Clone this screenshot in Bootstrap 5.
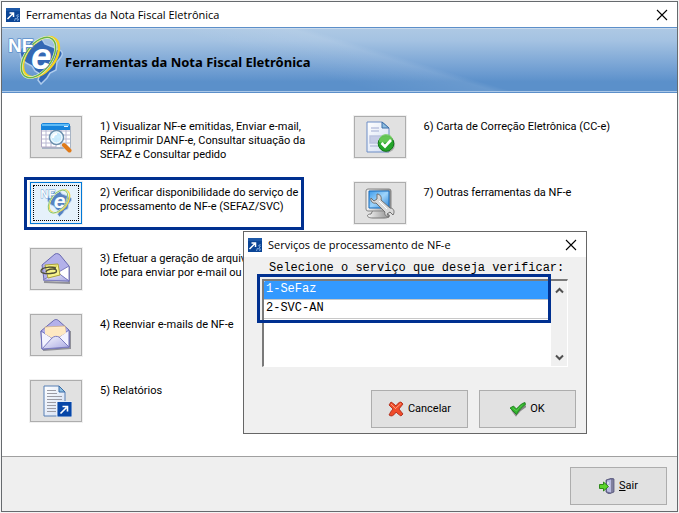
<!DOCTYPE html>
<html lang="pt-BR">
<head>
<meta charset="utf-8">
<meta name="viewport" content="width=device-width, initial-scale=1">
<title>Ferramentas da Nota Fiscal Eletrônica</title>
<link href="https://cdn.jsdelivr.net/npm/bootstrap@5.3.0/dist/css/bootstrap.min.css" rel="stylesheet">
<style>
  body { font: 11px/14px Roboto, "Liberation Sans", sans-serif; color: #000; background: #f4f4f4; }
  .app-window { min-height: calc(100vh - 2px); margin: 1px 1px 0; border: 1px solid #666a6e; background: #fff; }
  .title-bar { height: 25px; padding: 0 8px 0 4px; gap: 6px; background: #fff; font: 11px/16px "Open Sans", sans-serif; }
  .title-bar h1, .title-bar h2 { font: inherit; }
  .close-btn { width: 14px; height: 14px; line-height: 0; }
  .bare { border: 0; padding: 0; background: none; color: inherit; }
  .banner { height: 66px; padding-left: 5px; border-top: 1px solid #5c8fc9; border-bottom: 1px solid #5c8fc9;
    box-shadow: inset 0 1px #c9daec, inset 0 -1px #abc8e8;
    background: linear-gradient(17deg, transparent 42%, rgba(255,255,255,.09) 56%, transparent 58%), linear-gradient(#aec9e4, #a4c2e2 20%, #6a9ad0 72%, #5b90ca 84%, #5b90ca); }
  .banner strong { padding: 3px 0 0 2px; font: 700 13px/18px "Noto Sans", sans-serif; }
  .tools { padding: 22px 0 11px 28px; }
  .tool { height: 66px; gap: 18px; }
  .tool-btn, .cmd-btn { background: #e1e1e1; border: 1px solid #adadad; border-radius: 0; color: #000; font: inherit; }
  .tool-btn { width: 52px; height: 42px; padding: 0; line-height: 0; flex: none; margin-top: 1px; box-shadow: 0 0 0 1px #f0f0f0; }
  .tool-btn.current { border-color: #0078d7; background: #e5f1fb; outline: 1px dotted #000; outline-offset: -4px; }
  .tool label { padding-top: 5px; white-space: nowrap; cursor: pointer; }
  .marker { position: absolute; border: 3px solid #003090; pointer-events: none; }
  .tool .marker { inset: -4px 50px 17px -6px; }
  .foot { height: 55px; padding: 4px 10px 0 0; background: #efefef; border-top: 1px solid #a0a0a0; }
  .cmd-btn { width: 97px; height: 38px; gap: 4px; }
  .service-dialog { position: absolute; left: 243px; top: 231px; width: 344px; border: 1px solid #666; background: #f0f0f0; }
  .service-body { padding: 3px 10px 5px 18px; font-family: "Liberation Mono", "Courier New", monospace; font-size: 12px; }
  .service-body label { display: block; padding-left: 7px; line-height: 16px; white-space: nowrap; }
  .list-frame { height: 88px; margin: 3px 8px 0 0; border: 1px solid #fff; border-top: 2px solid #7a7a7a; border-left: 2px solid #7a7a7a; background: #fff; }
  .service-list { border: 0; outline: 0; padding: 0; background: #fff; color: #000; font-size: 12px; overflow: hidden; scrollbar-width: none; }
  .service-list::-webkit-scrollbar { display: none; }
  .service-list option { height: 19px; min-height: 19px; padding: 1px 2px 0; line-height: 17px; border-bottom: 1px solid #c8c8c8; }
  .service-list option:checked { background: #39f linear-gradient(#39f, #39f); color: #fff; }
  .list-frame .marker { left: -7px; right: 16px; top: -7px; height: 49px; }
  .scroll-col { width: 16px; background: #f0f0f0; padding: 6px 0 5px; line-height: 0; }
  .service-actions { gap: 11px; margin-top: 23px; font: 11px/14px Roboto, sans-serif; }
</style>
<script src="https://cdn.jsdelivr.net/npm/bootstrap@5.3.0/dist/js/bootstrap.bundle.min.js"></script>
</head>
<body>
<svg width="0" height="0" class="position-absolute" aria-hidden="true">
  <defs>
    <linearGradient id="paper" x2="1" y2="1"><stop offset="0" stop-color="#fff"/><stop offset="1" stop-color="#cfdcf2"/></linearGradient>
    <linearGradient id="lilac" x2="1" y2="1"><stop offset="0" stop-color="#fafaff"/><stop offset="1" stop-color="#a9a9e2"/></linearGradient>
    <linearGradient id="screen" x2="1" y2="1"><stop offset="0" stop-color="#3d9bea"/><stop offset=".5" stop-color="#9fd4fb"/><stop offset="1" stop-color="#2c83d6"/></linearGradient>
    <linearGradient id="metal" x2="1" y2="0"><stop offset="0" stop-color="#f4f4f4"/><stop offset="1" stop-color="#8f8f8f"/></linearGradient>
    <symbol id="app" viewBox="0 0 14 14">
      <path fill="#0b4596" d="M0 0h14v14H0z"/><path fill="#2f6cb8" d="M0 0h14v3H0z" opacity=".5"/>
      <path d="M1.500 11 7 5.500M3.500 5h4v4" fill="none" stroke="#fff" stroke-width="1.500"/>
      <path d="M12.500 6l-2 2h2l-2 3h2l-1 2M8.500 13l1-3" fill="none" stroke="#7fa8dc"/>
    </symbol>
    <symbol id="close" viewBox="0 0 14 14"><path d="M2 2l10 10M12 2L2 12" stroke="#000" stroke-width="1.100"/></symbol>
    <symbol id="nfe" viewBox="0 0 56 50">
      <path d="M14 13l7-3 4-5 4 3 6-4 3 5 8 3 6 3c4 1 4 4 2 7l-4 5-1 8-6 3-3 5-6 6-3-4 2-6-5-3-3-5-6-3-5-5-1-5z" fill="#3468b4" stroke="#aecbec" stroke-width="1.500"/>
      <g fill="none"><ellipse cx="34" cy="22" rx="23" ry="14" transform="rotate(-52 34 22)" stroke="#f5d321" stroke-width="2.400"/>
      <ellipse cx="31.500" cy="22.500" rx="23" ry="13" transform="rotate(-54 31.500 22.500)" stroke="#e9f6dd" stroke-width="2.600"/>
      <ellipse cx="31.500" cy="22.500" rx="23" ry="13" transform="rotate(-54 31.500 22.500)" stroke="#6cb443" stroke-width="1.500"/></g>
      <text x="1" y="17" font-family="Liberation Sans, sans-serif" font-weight="700" font-size="19" fill="#fff" stroke="#5c90cc" stroke-width="1.500" paint-order="stroke">NF</text>
      <text x="24" y="34" font-family="Liberation Sans, sans-serif" font-style="italic" font-weight="700" font-size="37" fill="#fff" stroke="#3468b4" stroke-width="1" paint-order="stroke">e</text>
    </symbol>
    <symbol id="calendar" viewBox="0 0 32 32">
      <path fill="#a8b4c4" d="M2 5h29v23H2z"/><path fill="#fff" d="M1 4h29v22H1z"/><path d="M1 10h29M1 14h29M1 18h29M1 22h29M6 8v18M11 8v18M16 8v18M21 8v18M26 8v18" stroke="#b8b8d2"/>
      <path fill="#1684dc" d="M1 4c0-1 1-2 2-2h25c1 0 2 1 2 2v5H1z"/><path fill="#5ebaf5" d="M2 3h27v2H2z"/><path fill="#e8f4ff" d="M24 5h4v1h-4z"/>
      <path fill="none" stroke="#b0a8c4" d="M1.500 9v17H16"/>
      <path d="M22 22l7 7" stroke="#d8e0ea" stroke-width="5"/><path d="M24 24l5.500 5.500" stroke="#e07a18" stroke-width="4" stroke-linecap="round"/>
      <circle cx="16.500" cy="16.500" r="7" fill="#c6ecff" fill-opacity=".9" stroke="#6d8fac" stroke-width="1.500"/><circle cx="16.500" cy="16.500" r="5.500" fill="none" stroke="#fff"/><path d="M13 17c0-3 2-4 4-4" stroke="#fff" stroke-width="2" fill="none"/>
    </symbol>
    <symbol id="clipmail" viewBox="0 0 32 32">
      <path d="M4 29l25 1V14" fill="none" stroke="#909098" stroke-width="2"/>
      <path d="M2 12 15 1c2-1 4 0 5 1l9 11v15L4 27z" fill="#b3b1ea" stroke="#6868b0"/>
      <path d="M29 13v15l-12-8z" fill="#fff" stroke="#7c7cc0"/><path d="M3 27l14-8 12 9z" fill="url(#lilac)" stroke="#7c7cc0"/>
      <path d="M5 12l13-1 2 11-12 3z" fill="#f7f48a" stroke="#aaa23c"/><path d="M8 14l9-1M8 21l9-2" stroke="#c1b950"/>
      <path d="M16 15c-8-2-15 0-15 3s7 3 13 2c4-1 3-4-1-4-5 0-7 2-7 3" fill="none" stroke="#4f4f38" stroke-width="1.300"/>
    </symbol>
    <symbol id="mail" viewBox="0 0 32 32">
      <path d="M3 31l27-2V12" fill="none" stroke="#909098" stroke-width="2"/>
      <path d="M1 12 13 2c2-2 4-2 6 0l10 9v17L2 30z" fill="#b3b1ea" stroke="#6868b0"/>
      <path d="M5 8l20-1 1 11-10 5-10-5z" fill="#ffe9c2" stroke="#d0ad80" stroke-width=".7"/><path d="M6 9l18-1v4H6z" fill="#fff6e4"/>
      <path d="M1 12l11 7 7-1 10-7v17L2 30z" fill="#f3f3ff" stroke="#6f6fb8"/><path d="M5 9l20-1 1 6-7 4-7 1-7-4z" fill="#ffe9c2"/><path d="M2 30l10-11c2-2 5-2 7-1l10 10z" fill="url(#lilac)" stroke="#7c7cc0"/>
    </symbol>
    <symbol id="report" viewBox="0 0 32 32">
      <path d="M4 1h15l6 6v24H4z" fill="url(#paper)" stroke="#577fb4"/><path d="M19 1v6h6z" fill="#8dbfe2" stroke="#3c6da6"/>
      <path d="M7 5.500h9M7 8.500h10M7 11.500h15M7 14.500h15M7 17.500h9M7 20.500h9M7 23.500h9M7 26.500h9" stroke="#9b9ba4"/>
      <path fill="#0646a8" stroke="#fff" stroke-width=".8" d="M17 16.500h15v15.500H17z"/><path d="M20.500 28.500l6-6M22.500 21.500h5v5" stroke="#fff" stroke-width="1.600" fill="none"/>
    </symbol>
    <symbol id="letter" viewBox="0 0 32 32">
      <path d="M3 1h15l7 6v24H3z" fill="url(#paper)" stroke="#6d8dc6"/><path d="M18 1v6h7z" fill="#8dbfe2" stroke="#3c6da6"/>
      <path d="M7 7h8M7 10h8M6 15h15v7H6zM6 25h10" fill="#c5cce6" stroke="#bcc4e0" stroke-width="1.500"/>
      <circle cx="23" cy="23.500" r="8" fill="#777" opacity=".5"/><circle cx="22" cy="22.500" r="7.800" fill="#25a52a" stroke="#0d7716"/><path d="M15 21a7 7 0 0 1 14-2c-4 0-7 5-14 2z" fill="#73d060" opacity=".8"/>
      <path d="M17.500 22l3.500 3.500 6-6.500" fill="none" stroke="#fff" stroke-width="2.600"/>
    </symbol>
    <symbol id="monitor" viewBox="0 0 32 32">
      <path d="M9 23h11l2 4c5 0 5 4-2 4H9c-7 0-7-4-2-4z" fill="url(#metal)" stroke="#777"/>
      <rect x="2" y="2" width="25" height="22" rx="2" fill="url(#metal)" stroke="#858585"/><path d="M5 4h20v17H5z" fill="url(#screen)" stroke="#176abb"/>
      <path d="M13 7c3 0 5 3 4 6l9 8c4 0 5 4 3 7l-3-3-3 2 2 3c-3 0-5-3-4-5l-9-9c-3 1-6-2-5-5l3 3 3-2z" fill="#dadada" stroke="#707070"/><path d="M15 14l8 8" stroke="#fff"/>
    </symbol>
    <symbol id="cancel" viewBox="0 0 16 16"><path d="M3 1c2 1 4 3 5 4 1-2 3-4 5-4l2 2-4 5 4 5-2 2c-2-1-4-3-5-4-1 2-3 4-5 4l-2-1c1-2 2-4 4-6L1 4z" fill="#ef4b2a" stroke="#a52211" stroke-width=".8"/><path d="M3 3l5 5M13 2.500 8 7" stroke="#ff9a78"/></symbol>
    <symbol id="ok" viewBox="0 0 16 16"><path d="M2 9l4 5c3-4 6-7 10-9" fill="none" stroke="#888" stroke-width="2"/><path d="M0 7l3.500-2 3 3C9 5 12 2 15 1.500l.5 2C12 6 9 9 6.500 13.500z" fill="#32b22d" stroke="#167a17" stroke-width=".8"/><path d="M2.500 7l4 3c2-3 4-4 6-6" fill="none" stroke="#5fd050" stroke-width=".8"/></symbol>
    <symbol id="exit" viewBox="0 0 16 16">
      <path d="M7 2l6-2 2 1v13l-5 2-3-2z" fill="#6d6d96" stroke="#4a4a70" stroke-width=".7"/><path d="M8 2.500l4-1v13l-4-1z" fill="#b9bbe0"/><path d="M12 2l2.500-.5v12L12 14.500z" fill="#80809e"/><path d="M10 7v2M9 4v2" stroke="#fff"/>
      <path d="M.5 6.500h4V4l5 4.500-5 4.500v-2.500h-4z" fill="#5bd42c" stroke="#22800e" stroke-width=".9"/>
    </symbol>
  </defs>
</svg>

<main class="app-window d-flex flex-column">
  <header class="title-bar d-flex align-items-center">
    <svg width="14" height="14" aria-hidden="true"><use href="#app"/></svg>
    <h1 class="m-0">Ferramentas da Nota Fiscal Eletrônica</h1>
    <button type="button" class="bare close-btn ms-auto" aria-label="Fechar"><svg width="14" height="14"><use href="#close"/></svg></button>
  </header>
  <div class="banner d-flex align-items-center">
    <svg width="56" height="50" class="flex-shrink-0" aria-hidden="true"><use href="#nfe"/></svg>
    <strong>Ferramentas da Nota Fiscal Eletrônica</strong>
  </div>

  <section class="tools row g-0 flex-grow-1">
    <div class="col-6">
      <div class="tool d-flex align-items-start">
        <button id="t1" type="button" class="btn tool-btn" aria-label="Visualizar NF-e"><svg width="32" height="32"><use href="#calendar"/></svg></button>
        <label for="t1">1) Visualizar NF-e emitidas, Enviar e-mail,<br>Reimprimir DANF-e, Consultar situação da<br>SEFAZ e Consultar pedido</label>
      </div>
      <div class="tool d-flex align-items-start position-relative">
        <button id="t2" type="button" class="btn tool-btn current" aria-label="Verificar disponibilidade"><svg width="32" height="30" opacity=".8"><use href="#nfe"/></svg></button>
        <label for="t2">2) Verificar disponibilidade do serviço de<br>processamento de NF-e (SEFAZ/SVC)</label>
        <span class="marker"></span>
      </div>
      <div class="tool d-flex align-items-start">
        <button id="t3" type="button" class="btn tool-btn" aria-label="Gerar arquivos"><svg width="32" height="32"><use href="#clipmail"/></svg></button>
        <label for="t3">3) Efetuar a geração de arquivos<br>lote para enviar por e-mail ou</label>
      </div>
      <div class="tool d-flex align-items-start">
        <button id="t4" type="button" class="btn tool-btn" aria-label="Reenviar e-mails"><svg width="32" height="32"><use href="#mail"/></svg></button>
        <label for="t4">4) Reenviar e-mails de NF-e</label>
      </div>
      <div class="tool d-flex align-items-start">
        <button id="t5" type="button" class="btn tool-btn" aria-label="Relatórios"><svg width="32" height="32"><use href="#report"/></svg></button>
        <label for="t5">5) Relatórios</label>
      </div>
    </div>
    <div class="col-6">
      <div class="tool d-flex align-items-start">
        <button id="t6" type="button" class="btn tool-btn" aria-label="Carta de Correção"><svg width="32" height="32"><use href="#letter"/></svg></button>
        <label for="t6">6) Carta de Correção Eletrônica (CC-e)</label>
      </div>
      <div class="tool d-flex align-items-start">
        <button id="t7" type="button" class="btn tool-btn" aria-label="Outras ferramentas"><svg width="32" height="32"><use href="#monitor"/></svg></button>
        <label for="t7">7) Outras ferramentas da NF-e</label>
      </div>
    </div>
  </section>

  <footer class="foot d-flex align-items-center justify-content-end">
    <button type="button" class="btn cmd-btn d-flex align-items-center justify-content-center"><svg width="16" height="16" aria-hidden="true"><use href="#exit"/></svg><span><u>S</u>air</span></button>
  </footer>
</main>

<section class="service-dialog" role="dialog" aria-labelledby="svc-title">
  <header class="title-bar d-flex align-items-center">
    <svg width="14" height="14" aria-hidden="true"><use href="#app"/></svg>
    <h2 id="svc-title" class="m-0">Serviços de processamento de NF-e</h2>
    <button type="button" class="bare close-btn ms-auto" aria-label="Fechar"><svg width="14" height="14"><use href="#close"/></svg></button>
  </header>
  <div class="service-body">
    <label for="svc">Selecione o serviço que deseja verificar:</label>
    <div class="list-frame d-flex position-relative">
      <select id="svc" class="service-list flex-grow-1" size="4">
        <option selected>1-SeFaz</option>
        <option>2-SVC-AN</option>
      </select>
      <div class="scroll-col d-flex flex-column justify-content-between align-items-center">
        <button type="button" class="bare" aria-label="Subir"><svg width="9" height="7" viewBox="0 0 9 7"><path d="M1 5.500 4.500 2 8 5.500" fill="none" stroke="#505050" stroke-width="2"/></svg></button>
        <button type="button" class="bare" aria-label="Descer"><svg width="9" height="7" viewBox="0 0 9 7"><path d="M1 1.500 4.500 5 8 1.500" fill="none" stroke="#505050" stroke-width="2"/></svg></button>
      </div>
      <span class="marker"></span>
    </div>
    <div class="service-actions d-flex justify-content-end">
      <button type="button" class="btn cmd-btn d-flex align-items-center justify-content-center"><svg width="16" height="16" aria-hidden="true"><use href="#cancel"/></svg>Cancelar</button>
      <button type="button" class="btn cmd-btn d-flex align-items-center justify-content-center"><svg width="16" height="16" aria-hidden="true"><use href="#ok"/></svg>OK</button>
    </div>
  </div>
</section>
</body>
</html>
